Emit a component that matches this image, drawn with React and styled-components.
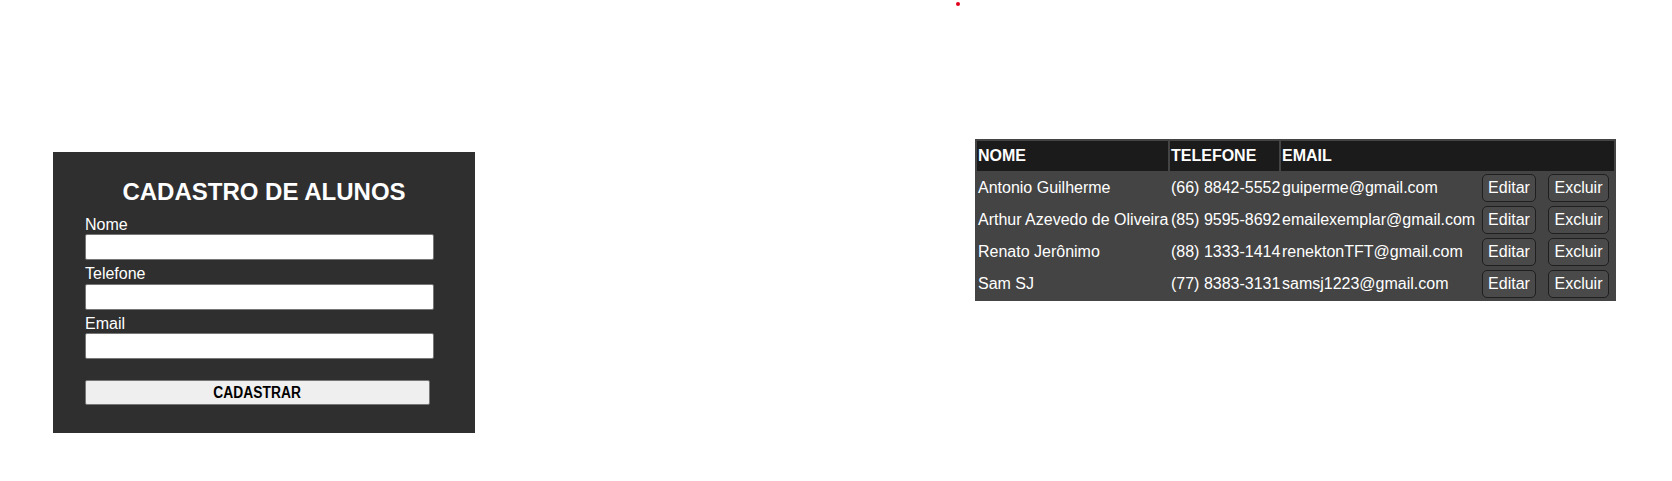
import React from "react";
import styled, { createGlobalStyle } from "styled-components";

const Global = createGlobalStyle`
  html, body { margin: 0; padding: 0; background: #ffffff; }
  body { font-family: "Liberation Sans", Arial, sans-serif; font-size: 16px; color: #000; }
  * { box-sizing: border-box; }
`;

const Page = styled.div`
  width: 1672px;
  min-height: 481px;
  padding-top: 2px;
`;

const Dot = styled.div`
  width: 4px;
  height: 4px;
  margin-left: 956px;
  border-radius: 50%;
  background: #e3001b;
`;

const Main = styled.main`
  display: flex;
  justify-content: space-between;
  align-items: flex-start;
  padding: 0 56px 0 53px;
`;

const FormCard = styled.form`
  width: 422px;
  height: 281px;
  margin-top: 146px;
  background: #2f2f2f;
  padding: 26px 0 0 32px;
  display: flex;
  flex-direction: column;
`;

const Title = styled.h2`
  margin: 0 0 10px -32px;
  width: 422px;
  text-align: center;
  color: #ffffff;
  font-size: 24px;
  font-weight: bold;
`;

const Field = styled.div`
  display: flex;
  flex-direction: column;
  margin-bottom: ${(p) => (p.$last ? "21px" : "5px")};
`;

const Label = styled.label`
  color: #ffffff;
  font-size: 16px;
  line-height: 18.4px;
`;

const Input = styled.input`
  width: 349px;
  height: 26px;
  border: 1px solid #767676;
  border-radius: 2px;
  background: #ffffff;
  font-family: inherit;
  font-size: 14px;
  padding: 1px 4px;
`;

const SubmitButton = styled.button`
  width: 345px;
  height: 25px;
  border: 1px solid #767676;
  border-radius: 2px;
  background: #efefef;
  color: #000;
  font-family: "Liberation Sans Narrow", "Arial Narrow", "Liberation Sans", Arial, sans-serif;
  font-weight: bold;
  font-size: 16px;
  padding: 0;
  display: flex;
  align-items: center;
  justify-content: center;
`;

const Narrow = styled.span`
  display: inline-block;
  transform: scaleX(0.86);
  letter-spacing: 0.1px;
`;

const Table = styled.table`
  width: 641px;
  margin-top: 133px;
  background: #444444;
  border-spacing: 2px;
  table-layout: fixed;
  color: #ffffff;
  font-size: 16px;
`;

const Th = styled.th`
  background: #1b1b1b;
  height: 30px;
  padding: 0 1px;
  text-align: left;
  font-weight: bold;
`;

const Td = styled.td`
  height: 30px;
  padding: 0 1px;
  text-align: ${(p) => (p.$center ? "center" : "left")};
  white-space: nowrap;
`;

const RowButton = styled.button`
  height: 28px;
  padding: 0 5px;
  background: #4a4a4a;
  color: #ffffff;
  border: 1px solid #1f1f1f;
  border-radius: 5px;
  font-family: inherit;
  font-size: 16px;
  vertical-align: middle;
`;

const alunos = [
  { nome: "Antonio Guilherme", tel: "(66) 8842-5552", email: "guiperme@gmail.com" },
  { nome: "Arthur Azevedo de Oliveira", tel: "(85) 9595-8692", email: "emailexemplar@gmail.com" },
  { nome: "Renato Jerônimo", tel: "(88) 1333-1414", email: "renektonTFT@gmail.com" },
  { nome: "Sam SJ", tel: "(77) 8383-3131", email: "samsj1223@gmail.com" },
];

export default function App() {
  return (
    <Page>
      <Global />
      <Dot />
      <Main>
        <FormCard onSubmit={(e) => e.preventDefault()}>
          <Title>CADASTRO DE ALUNOS</Title>
          <Field>
            <Label>Nome</Label>
            <Input type="text" />
          </Field>
          <Field>
            <Label>Telefone</Label>
            <Input type="text" />
          </Field>
          <Field $last>
            <Label>Email</Label>
            <Input type="text" />
          </Field>
          <SubmitButton type="submit">
            <Narrow>CADASTRAR</Narrow>
          </SubmitButton>
        </FormCard>
        <Table>
          <colgroup>
            <col style={{ width: 191 }} />
            <col style={{ width: 109 }} />
            <col style={{ width: 194 }} />
            <col style={{ width: 64 }} />
            <col style={{ width: 71 }} />
          </colgroup>
          <thead>
            <tr>
              <Th>NOME</Th>
              <Th>TELEFONE</Th>
              <Th colSpan={3}>EMAIL</Th>
            </tr>
          </thead>
          <tbody>
            {alunos.map((a) => (
              <tr key={a.email}>
                <Td>{a.nome}</Td>
                <Td>{a.tel}</Td>
                <Td>{a.email}</Td>
                <Td $center>
                  <RowButton type="button">Editar</RowButton>
                </Td>
                <Td $center>
                  <RowButton type="button">Excluir</RowButton>
                </Td>
              </tr>
            ))}
          </tbody>
        </Table>
      </Main>
    </Page>
  );
}
